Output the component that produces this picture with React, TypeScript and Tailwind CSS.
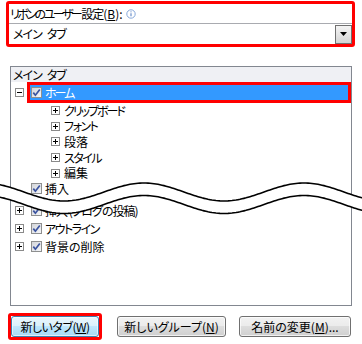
import type { ReactNode } from "react";

const FONT = "font-['Noto_Sans_CJK_JP','Liberation_Sans',sans-serif] [font-feature-settings:'palt']";

// wave used to mark the omitted part of the tree
const waveY = (x: number) => 192 - 9 * Math.cos((Math.PI * (x + 16)) / 80);
const xs = Array.from({ length: 185 }, (_, i) => -4 + i * 2);
const upper = xs.map((x) => `${x},${waveY(x).toFixed(2)}`);
const lower = xs.map((x) => `${x},${(waveY(x) + 12.5).toFixed(2)}`);
const band = `M${upper.join("L")}L${[...lower].reverse().join("L")}Z`;

const ExpandBox = ({ open }: { open?: boolean }) => (
  <svg width="9" height="9" viewBox="0 0 9 9" className="shrink-0">
    <rect x="0.5" y="0.5" width="8" height="8" fill="#fff" stroke="#8a8a8a" />
    <path d="M2 4.5h5" stroke="#000" />
    {!open && <path d="M4.5 2v5" stroke="#000" />}
  </svg>
);

const CheckBox = () => (
  <div className="w-[11px] h-[11px] shrink-0 border border-[#8e8f8f] bg-[linear-gradient(135deg,#d3d5da,#f5f6f8)] flex items-center justify-center">
    <svg width="9" height="9" viewBox="0 0 9 9">
      <path d="M1.3 4.6l2.1 2.6L7.8 1.4" fill="none" stroke="#3b54a0" strokeWidth="1.7" />
    </svg>
  </div>
);

const InfoIcon = () => (
  <svg width="10" height="10" viewBox="0 0 10 10" className="ml-[3px]">
    <circle cx="5" cy="5" r="4.2" fill="#fff" stroke="#7b9fd6" strokeWidth="0.9" />
    <path d="M5 4.3v3" stroke="#5c84c4" strokeWidth="1.1" />
    <circle cx="5" cy="2.8" r="0.6" fill="#5c84c4" />
  </svg>
);

const TopRow = ({ label, tight = "" }: { label: string; tight?: string }) => (
  <div className="h-[18px] flex items-center pl-[4px]">
    <ExpandBox />
    <div className="ml-[7px]">
      <CheckBox />
    </div>
    <span className={`ml-[3px] text-[12px] leading-none text-black whitespace-nowrap ${tight}`}>{label}</span>
  </div>
);

const GroupRow = ({ label, tight = "" }: { label: string; tight?: string }) => (
  <div className="h-[15.6px] flex items-center pl-[40px]">
    <ExpandBox />
    <span className={`ml-[4px] text-[12px] leading-none text-black ${tight}`}>{label}</span>
  </div>
);

const WinButton = ({ children, hot, width }: { children: ReactNode; hot?: boolean; width: string }) => (
  <div
    className={
      hot
        ? "h-[21px] w-full rounded-[3px] border border-[#3c7fb1] bg-[linear-gradient(#eaf6fd_0%,#d9f0fc_50%,#bee6fd_50%,#a7d9f5_100%)] shadow-[inset_0_0_0_1px_rgba(255,255,255,0.6)] flex items-center justify-center text-[12px] leading-none text-black tracking-[-0.5px]"
        : `${width} h-[21px] rounded-[3px] border border-[#707070] bg-[linear-gradient(#f2f2f2_0%,#ebebeb_50%,#dddddd_50%,#cfcfcf_100%)] shadow-[inset_0_0_0_1px_rgba(255,255,255,0.7)] flex items-center justify-center text-[12px] leading-none text-black`
    }
  >
    {children}
  </div>
);

export default function App() {
  return (
    <div className={`relative w-[362px] h-[344px] bg-white overflow-hidden ${FONT}`}>
      {/* ribbon customize combo */}
      <div className="ml-[6px] mt-[1px] w-[349px] h-[46px] border-[3px] border-[#ff0000] rounded-[3px] flex flex-col">
        <div className="h-[19px] flex items-center pl-[1px] text-[12px] leading-none text-black">
          <span className="tracking-[-2.5px]">リボンのユーザー</span>
          <span className="ml-[1px] tracking-[-1px]">設定</span>
          <span>
            (<span className="underline">B</span>):
          </span>
          <InfoIcon />
        </div>
        <div className="flex-1 flex items-center border-t border-[#a9abb0] bg-white pl-[4px]">
          <span className="flex-1 text-[12px] leading-none text-black tracking-[-1px]">
            メイン<span className="ml-[5px]">タブ</span>
          </span>
          <div className="w-[17px] h-[19px] border border-[#707070] bg-[linear-gradient(#f4f4f4,#d4d4d4)] flex items-center justify-center">
            <svg width="7" height="4" viewBox="0 0 7 4">
              <path d="M0 0h7L3.5 4z" fill="#000" />
            </svg>
          </div>
        </div>
      </div>

      {/* tree list */}
      <div className="ml-[10px] mt-[19px] w-[342px] h-[240px] border border-[#828790] bg-white">
        <div className="h-[15px] bg-[#eff0f4] flex items-center pl-[2px] text-[12px] leading-none text-black tracking-[-1px]">
          メイン<span className="ml-[5px]">タブ</span>
        </div>
        <div className="h-[21px] flex items-center pl-[4px]">
          <ExpandBox open />
          <div className="ml-[3px] w-[326px] h-[21px] border-[3px] border-[#ff0000] bg-[#3399ff] flex items-center pl-[1px]">
            <CheckBox />
            <span className="ml-[3px] text-[12px] leading-none text-white tracking-[-2px]">ホーム</span>
          </div>
        </div>
        <GroupRow label="クリップボード" tight="tracking-[-2px]" />
        <GroupRow label="フォント" tight="tracking-[-1.5px]" />
        <GroupRow label="段落" />
        <GroupRow label="スタイル" tight="tracking-[-1.5px]" />
        <GroupRow label="編集" />
        <div className="h-[15.6px] flex items-center pl-[4px]">
          <div className="w-[9px]" />
          <div className="ml-[7px]">
            <CheckBox />
          </div>
          <span className="ml-[3px] text-[12px] leading-none text-black">挿入</span>
        </div>
        <div className="h-[5.4px]" />
        <TopRow label="挿入 (ブログの投稿)" tight="tracking-[-1px]" />
        <TopRow label="アウトライン" tight="tracking-[-1.5px]" />
        <TopRow label="背景の削除" />
      </div>

      {/* buttons */}
      <div className="mt-[7px] ml-[8px] flex items-center h-[27px]">
        <div className="w-[94px] h-[27px] border-[3px] border-[#ff0000] rounded-[3px]">
          <WinButton hot width="">
            新しいタブ(<span className="underline">W</span>)
          </WinButton>
        </div>
        <div className="ml-[15px]">
          <WinButton width="w-[109px]">
            新しいグループ(<span className="underline">N</span>)
          </WinButton>
        </div>
        <div className="ml-[13px]">
          <WinButton width="w-[112px]">
            名前の変更(<span className="underline">M</span>)...
          </WinButton>
        </div>
      </div>

      {/* omission wave */}
      <svg
        className="absolute left-0 top-[170px]"
        width="362"
        height="50"
        viewBox="0 170 362 50"
      >
        <path d={band} fill="#fff" />
        <path d={`M${upper.join("L")}`} fill="none" stroke="#000" strokeWidth="1.6" />
        <path d={`M${lower.join("L")}`} fill="none" stroke="#000" strokeWidth="1.6" />
      </svg>
    </div>
  );
}
